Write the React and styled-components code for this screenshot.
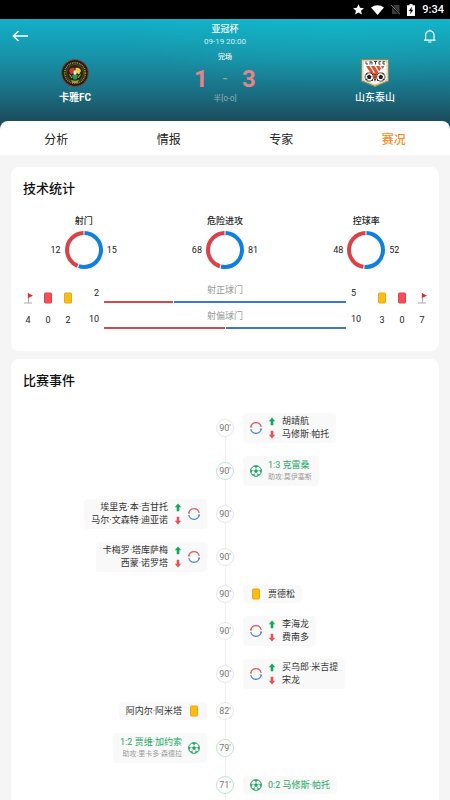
import React from "react";
import styled, { createGlobalStyle } from "styled-components";

const RED = "#dc4048";
const BLUE = "#0f7fe0";
const GREEN = "#1fa863";

const GlobalStyle = createGlobalStyle`
  * { box-sizing: border-box; }
  body {
    margin: 0;
    background: #f5f5f5;
    color: #222;
    font-family: Roboto, "Noto Sans CJK SC", sans-serif;
    font-size: 9px;
  }
  button { border: 0; padding: 0; background: none; font: inherit; color: inherit; cursor: pointer; }
  svg { display: block; flex: none; }
  h1, h2, h3, p, ol { margin: 0; padding: 0; font: inherit; list-style: none; }
`;

const Page = styled.div`
  display: flex;
  flex-direction: column;
  min-height: 100vh;
`;

const StatusBar = styled.div`
  display: flex;
  justify-content: flex-end;
  align-items: center;
  gap: 7px;
  height: 19px;
  padding: 0 6px 0 0;
  background: #000;
  color: #fff;
  font-size: 11px;
  font-weight: 500;
`;

const Header = styled.header`
  padding: 4px 0 24px;
  color: #fff;
  background:
    radial-gradient(ellipse at 75% 0%, rgba(20, 196, 204, 0.3), transparent 45%),
    linear-gradient(180deg, #12b0c9 0%, #1795aa 32%, #1a7085 66%, #1b4f5f 90%);
`;

const TopBar = styled.div`
  display: grid;
  grid-template-columns: 1fr auto 1fr;
  align-items: center;
  padding: 0 12px;
`;

const IconButton = styled.button`
  justify-self: ${(p) => p.$side};
`;

const League = styled.h1`
  text-align: center;
  font-size: 9px;
  line-height: 13px;
  font-weight: 500;
`;

const Kickoff = styled.p`
  text-align: center;
  font-size: 8px;
  line-height: 12px;
  color: #d6eef3;
`;

const Match = styled.div`
  display: grid;
  grid-template-columns: repeat(3, 1fr);
  padding-top: 4px;
`;

const Team = styled.div`
  display: flex;
  flex-direction: column;
  align-items: center;
  gap: 4px;
  padding-top: 7px;
  font-size: 10px;
  line-height: 14px;
  font-weight: ${(p) => (p.$strong ? 700 : 500)};
`;

const Result = styled.div`
  display: flex;
  flex-direction: column;
  align-items: center;
`;

const Phase = styled.p`
  font-size: 7px;
  line-height: 11px;
  font-weight: 500;
`;

const Score = styled.p`
  display: grid;
  grid-template-columns: 24px 24px 24px;
  align-items: center;
  text-align: center;
  font-size: 24px;
  line-height: 32px;
  font-weight: 700;
  color: #e58489;
`;

const Dash = styled.span`
  font-size: 16px;
  font-weight: 400;
  color: #a9a3ad;
`;

const HalfTime = styled.p`
  font-size: 8px;
  line-height: 8px;
  color: #8fb0b9;
`;

const Tabs = styled.nav`
  display: grid;
  grid-template-columns: repeat(4, 1fr);
  height: 34px;
  margin-top: -8px;
  border-radius: 8px 8px 0 0;
  background: #fff;
`;

const Tab = styled.button`
  font-size: 12px;
  color: ${(p) => (p.$active ? "#fb8b1e" : "#222")};
  font-weight: ${(p) => (p.$active ? 500 : 400)};
`;

const Main = styled.main`
  display: flex;
  flex-direction: column;
  flex: 1;
  gap: 8px;
  padding: 12px 11px 0;
`;

const Card = styled.section`
  background: #fff;
  border-radius: ${(p) => (p.$open ? "8px 8px 0 0" : "8px")};
  padding-bottom: ${(p) => (p.$open ? 0 : 22)}px;
  flex: ${(p) => (p.$open ? "1 0 auto" : "none")};
  display: flex;
  flex-direction: column;
`;

const CardTitle = styled.h2`
  padding: 12px 12px 0;
  font-size: 13px;
  line-height: 20px;
  font-weight: 500;
  color: #111;
`;

const Rings = styled.div`
  display: grid;
  grid-template-columns: repeat(3, 1fr);
  padding: 16px 2px 0;
`;

const RingStat = styled.div`
  display: flex;
  flex-direction: column;
  align-items: center;
  gap: 3px;
`;

const RingLabel = styled.h3`
  font-size: 9px;
  line-height: 13px;
  font-weight: 500;
`;

const RingRow = styled.div`
  display: grid;
  grid-template-columns: 20px 38px 20px;
  align-items: center;
  gap: 4px;
  & > :first-child { text-align: right; }
`;

const Totals = styled.div`
  display: grid;
  grid-template-columns: 60px 1fr 60px;
  padding: 14px 7px 0;
`;

const Counts = styled.div`
  display: grid;
  grid-template-columns: repeat(3, 1fr);
  padding-top: 9px;
`;

const Count = styled.div`
  display: flex;
  flex-direction: column;
  align-items: center;
  gap: 10px;
  line-height: 12px;
`;

const Bars = styled.div`
  display: flex;
  flex-direction: column;
  gap: 6px;
`;

const BarRow = styled.div`
  display: grid;
  grid-template-columns: 21px 1fr 21px;
  align-items: center;
  gap: 5px;
  height: 20px;
  line-height: 12px;
  & > :first-child { text-align: right; }
`;

const BarBody = styled.div`
  display: flex;
  flex-direction: column;
  gap: 5px;
  text-align: center;
  color: #999;
`;

const Track = styled.div`
  display: flex;
  gap: 1px;
  height: 2px;
`;

const Segment = styled.span`
  background: ${(p) => p.$color};
`;

const Timeline = styled.ol`
  display: flex;
  flex-direction: column;
  flex: 1;
  gap: 13px;
  margin-top: 22px;
  padding-bottom: 6px;
  background: linear-gradient(#f0f0f0, #f0f0f0) center 8px / 1px 100% no-repeat;
`;

const Event = styled.li`
  display: grid;
  grid-template-columns: 1fr 18px 1fr;
  grid-template-areas: "home minute away";
  align-items: center;
  gap: 9px;
`;

const Minute = styled.time`
  grid-area: minute;
  display: grid;
  place-items: center;
  height: 18px;
  border: 1px solid ${(p) => (p.$goal ? "#b5ebcb" : "#e8e8e8")};
  border-radius: 50%;
  background: #fff;
  color: #777;
  font-size: 9px;
`;

const Bubble = styled.div`
  grid-area: ${(p) => p.$side};
  justify-self: ${(p) => (p.$side === "home" ? "end" : "start")};
  display: flex;
  flex-direction: ${(p) => (p.$side === "home" ? "row-reverse" : "row")};
  align-items: center;
  gap: 6px;
  min-height: ${(p) => (p.$tall ? 30 : 18)}px;
  padding: 0 7px;
  border-radius: 4px;
  background: #f9f9f9;
  text-align: ${(p) => (p.$side === "home" ? "right" : "left")};
  white-space: nowrap;
`;

const Arrows = styled.div`
  display: flex;
  flex-direction: column;
  gap: 4px;
`;

const Name = styled.p`
  font-size: 9px;
  line-height: 13px;
  color: ${(p) => (p.$goal ? GREEN : "#333")};
`;

const Assist = styled.p`
  font-size: 7px;
  line-height: 11px;
  color: #999;
`;

const BackIcon = () => (
  <svg width="16" height="12" viewBox="0 0 16 12" fill="none" stroke="#fff" strokeWidth="1.5">
    <path d="M6.5 1 1.3 6l5.2 5M1.3 6H16" />
  </svg>
);

const BellIcon = () => (
  <svg width="14" height="14" viewBox="0 0 14 14" fill="none" stroke="#fff" strokeWidth="1.2">
    <path d="M0 11.200h11.600M1.600 11V6a4.200 4.200 0 0 1 8.400 0v5M5.800.4v1.200M4.100 13h3.400" />
  </svg>
);

const StatusIcons = () => (
  <>
    <svg width="11" height="11" viewBox="0 0 24 24" fill="#fff">
      <path d="m12 .5 3.500 7.700 8.300.9-6.200 5.600 1.800 8.300L12 18.700 4.600 23l1.800-8.300L.2 9.100l8.300-.9z" />
    </svg>
    <svg width="13" height="10" viewBox="0 0 13 10" fill="#fff">
      <path d="M0 2.600C3.800-.7 9.200-.7 13 2.600L6.500 10z" />
    </svg>
    <svg width="9" height="11" viewBox="0 0 9 11">
      <path d="M3 1h5.500v9H1V3z" fill="#3c3c3c" />
      <path d="M0 1.500 8.500 10" stroke="#000" strokeWidth="2" />
      <path d="M0 .8 9 10.300" stroke="#777" />
    </svg>
    <svg width="8" height="12" viewBox="0 0 8 12">
      <path d="M2.500 0h3v1.200H8V12H0V1.200h2.500z" fill="#fff" />
      <path d="M4.800 2.800 1.800 7H3.600L3.200 10.200 6.300 5.800H4.400z" fill="#000" />
    </svg>
  </>
);

const KayaCrest = () => (
  <svg width="28" height="28" viewBox="0 0 28 28">
    <circle cx="14" cy="14" r="13.300" fill="#1d1b17" stroke="#8b3c2e" strokeWidth="1.200" strokeDasharray="1.600 .6" />
    <circle cx="14" cy="14" r="10.300" fill="none" stroke="#a08b3a" strokeWidth="1.800" strokeDasharray="1 .8" />
    <circle cx="14" cy="14" r="8.500" fill="#23231a" stroke="#74702c" strokeWidth=".6" />
    <path d="M8 12c.5-3 3-4 5.500-3v4L10 15.500z" fill="#d8332d" />
    <path d="M14.500 9c3-1 5 .5 5.500 3l-2 3.500-3.500-2.500z" fill="#f0cf2c" />
    <path d="m11 16.500 3-2.500 3 2.500-1.500 4h-3z" fill="#26985a" />
    <path d="M12.800 11.500h2.400l.5 3L14 16l-1.700-1.500z" fill="#f3f0d8" />
    <path d="M10 21c2.500 1 5.500 1 8 0l-1.500 3h-5z" fill="#a79a36" />
    <path d="M8.500 15.500 11 19M19.500 15.500 17 19" stroke="#d3b93a" strokeWidth="1" />
  </svg>
);

const TaishanCrest = () => (
  <svg width="28" height="28" viewBox="0 0 28 28">
    <path d="M.6.600h26.800v21.200L14 27.400.6 21.800z" fill="#fff" stroke="#8b8d55" strokeWidth="1.200" />
    <path d="M2 2h24v18.900L14 25.900 2 20.900z" fill="#fff" stroke="#c9a65c" strokeWidth=".6" />
    <path d="M5 2.500v2.500h2M9 2.500v3M9 3h2v2.500M13 2.500h3M14.500 2.500v3M20 2.700h-2v2.500h1.500M24 2.700h-2V5h2" fill="none" stroke="#26343e" strokeWidth=".9" />
    <path d="M5 7h3.500l5.500 9-2 2zM10 7h3.500l4 6.500-2 3zM15 7h3.500l1.500 2.500-1.700 3zM20 7h3.500l-2 3z" fill="#e0502c" />
    <circle cx="8.200" cy="18" r="4.200" fill="#fff" stroke="#222" strokeWidth=".8" />
    <circle cx="19.800" cy="18" r="4.200" fill="#fff" stroke="#222" strokeWidth=".8" />
    <path d="m8.200 15.500 2.300 1.700-.9 2.700H6.800l-.9-2.700zM4.200 15.200l2.300-1.600v1.900zM9.800 22l2-1.800.4 1.500zM4 20l2.200-.3.300 2zM19.800 15.500l2.300 1.700-.9 2.700h-2.800l-.9-2.700zM23.800 15.200l-2.300-1.600v1.900zM18.200 22l-2-1.800-.4 1.500zM24 20l-2.200-.3-.3 2z" fill="#222" />
    <path d="m14 13 2.500 4.500L14 23l-2.500-5.500z" fill="#d95a36" />
    <path d="m12.500 15 3 1M12.500 18h3M13 20.500h2" stroke="#4a2219" strokeWidth=".8" />
  </svg>
);

const CornerIcon = () => (
  <svg width="9" height="12" viewBox="0 0 9 12">
    <path d="M4.500 1v10M0 11h8" stroke="#aaa" fill="none" />
    <path d="M3.800 1 9 3.700 3.800 6z" fill="#e02b33" />
  </svg>
);

const BookingIcon = ({ red }) => (
  <svg width="12" height="12" viewBox="0 0 12 12">
    <rect x="2.500" y="1" width="7" height="10" rx="1" fill={red ? "#f4505a" : "#fbbc16"} stroke={red ? "#e2404b" : "#e7a90f"} />
  </svg>
);

const SwapIcon = () => (
  <svg width="12" height="12" viewBox="0 0 12 12" fill="none" strokeWidth="1.200">
    <path d="M.8 5a5.300 5.300 0 0 1 10.400 0" stroke="#dc5b60" />
    <path d="M11.200 7A5.300 5.300 0 0 1 .8 7" stroke="#477fc9" />
    <path d="m.1 3.400.3 2.400 2.100-.6z" fill="#dc5b60" />
    <path d="m11.900 8.600-.3-2.400-2.100.6z" fill="#477fc9" />
  </svg>
);

const BallIcon = () => (
  <svg width="12" height="12" viewBox="0 0 12 12">
    <circle cx="6" cy="6" r="5.400" fill="#fff" stroke={GREEN} strokeWidth="1" />
    <path d="m6 4 2 1.500-.8 2.300H4.800L4 5.500zM3.500 1h5L6 2.900zM11.600 4.200l-.6 4-1.800-2.700zM.4 4.200l.6 4 1.800-2.700zM10.300 9.400 7 11.500l.5-2.600zM1.700 9.400 5 11.500l-.5-2.600z" fill={GREEN} />
    <path d="M6 4V2.500M8 5.500l1.500-.4M7.200 7.800l.8 1.300M4.800 7.800 4 9.100M4 5.500l-1.500-.4" stroke={GREEN} strokeWidth=".5" />
  </svg>
);

const ArrowIcon = ({ down }) => (
  <svg width="8" height="9" viewBox="0 0 8 9">
    <path d={down ? "M4 8.500.8 4.700h1.900V.8h2.600v3.900h1.900z" : "M4 .5l3.200 3.800H5.300v3.900H2.700V4.300H.8z"} fill={down ? "#e55259" : "#16a65a"} />
  </svg>
);

const Ring = ({ home, away }) => {
  const share = (away / (home + away)) * 100;
  return (
    <svg width="38" height="38" viewBox="0 0 38 38" fill="none" strokeWidth="4">
      <g transform="rotate(-90 19 19)">
        <circle cx="19" cy="19" r="17" pathLength="100" stroke={BLUE} strokeDasharray={`${share - 1} 100`} strokeDashoffset="-.5" />
        <circle cx="19" cy="19" r="17" pathLength="100" stroke={RED} strokeDasharray={`${99 - share} 100`} strokeDashoffset={-share - 0.5} />
      </g>
    </svg>
  );
};

const tabs = ["分析", "情报", "专家", "赛况"];

const rings = [
  { label: "射门", home: 12, away: 15 },
  { label: "危险进攻", home: 68, away: 81 },
  { label: "控球率", home: 48, away: 52 },
];

const bars = [
  { label: "射正球门", home: 2, away: 5 },
  { label: "射偏球门", home: 10, away: 10 },
];

const homeCounts = [["corner", 4], ["red", 0], ["yellow", 2]];
const awayCounts = [["yellow", 3], ["red", 0], ["corner", 7]];

const events = [
  { minute: 90, side: "away", type: "swap", on: "胡靖航", off: "马修斯·帕托" },
  { minute: 90, side: "away", type: "goal", name: "1:3 克雷桑", assist: "助攻:莫伊塞斯" },
  { minute: 90, side: "home", type: "swap", on: "埃里克·本·吉甘托", off: "马尔·文森特·迪亚诺" },
  { minute: 90, side: "home", type: "swap", on: "卡梅罗·塔库萨梅", off: "西蒙·诺罗塔" },
  { minute: 90, side: "away", type: "yellow", name: "贾德松" },
  { minute: 90, side: "away", type: "swap", on: "李海龙", off: "费南多" },
  { minute: 90, side: "away", type: "swap", on: "买乌郎·米吉提", off: "宋龙" },
  { minute: 82, side: "home", type: "yellow", name: "阿内尔·阿米塔" },
  { minute: 79, side: "home", type: "goal", name: "1:2 贾维·加约索", assist: "助攻:里卡多·森德拉" },
  { minute: 71, side: "away", type: "goal", name: "0:2 马修斯·帕托" },
];

const CountGroup = ({ items }) => (
  <Counts>
    {items.map(([kind, value]) => (
      <Count key={kind}>
        {kind === "corner" ? <CornerIcon /> : <BookingIcon red={kind === "red"} />}
        <span>{value}</span>
      </Count>
    ))}
  </Counts>
);

const EventBubble = ({ event }) => {
  const { type, side, name, assist, on, off } = event;
  const goal = type === "goal";
  return (
    <Bubble $side={side} $tall={type === "swap" || Boolean(assist)}>
      {type === "swap" && <SwapIcon />}
      {goal && <BallIcon />}
      {type === "yellow" && <BookingIcon />}
      {type === "swap" && (
        <Arrows>
          <ArrowIcon />
          <ArrowIcon down />
        </Arrows>
      )}
      <div>
        <Name $goal={goal}>{name || on}</Name>
        {off && <Name>{off}</Name>}
        {assist && <Assist>{assist}</Assist>}
      </div>
    </Bubble>
  );
};

export default function App() {
  const [active, setActive] = React.useState("赛况");
  return (
    <Page>
      <GlobalStyle />
      <StatusBar>
        <StatusIcons />
        <span>9:34</span>
      </StatusBar>
      <Header>
        <TopBar>
          <IconButton $side="start" aria-label="返回"><BackIcon /></IconButton>
          <div>
            <League>亚冠杯</League>
            <Kickoff>09-19 20:00</Kickoff>
          </div>
          <IconButton $side="end" aria-label="通知"><BellIcon /></IconButton>
        </TopBar>
        <Match>
          <Team $strong><KayaCrest />卡雅FC</Team>
          <Result>
            <Phase>完场</Phase>
            <Score><span>1</span><Dash>-</Dash><span>3</span></Score>
            <HalfTime>半[0-0]</HalfTime>
          </Result>
          <Team><TaishanCrest />山东泰山</Team>
        </Match>
      </Header>
      <Tabs>
        {tabs.map((tab) => (
          <Tab key={tab} $active={tab === active} onClick={() => setActive(tab)}>{tab}</Tab>
        ))}
      </Tabs>
      <Main>
        <Card>
          <CardTitle>技术统计</CardTitle>
          <Rings>
            {rings.map(({ label, home, away }) => (
              <RingStat key={label}>
                <RingLabel>{label}</RingLabel>
                <RingRow>
                  <span>{home}</span>
                  <Ring home={home} away={away} />
                  <span>{away}</span>
                </RingRow>
              </RingStat>
            ))}
          </Rings>
          <Totals>
            <CountGroup items={homeCounts} />
            <Bars>
              {bars.map(({ label, home, away }) => (
                <BarRow key={label}>
                  <span>{home}</span>
                  <BarBody>
                    <span>{label}</span>
                    <Track>
                      <Segment $color="#cf4a52" style={{ flexGrow: home }} />
                      <Segment $color="#3f78c4" style={{ flexGrow: away }} />
                    </Track>
                  </BarBody>
                  <span>{away}</span>
                </BarRow>
              ))}
            </Bars>
            <CountGroup items={awayCounts} />
          </Totals>
        </Card>
        <Card $open>
          <CardTitle>比赛事件</CardTitle>
          <Timeline>
            {events.map((event, i) => (
              <Event key={i}>
                <Minute $goal={event.type === "goal"}>{event.minute}'</Minute>
                <EventBubble event={event} />
              </Event>
            ))}
          </Timeline>
        </Card>
      </Main>
    </Page>
  );
}
